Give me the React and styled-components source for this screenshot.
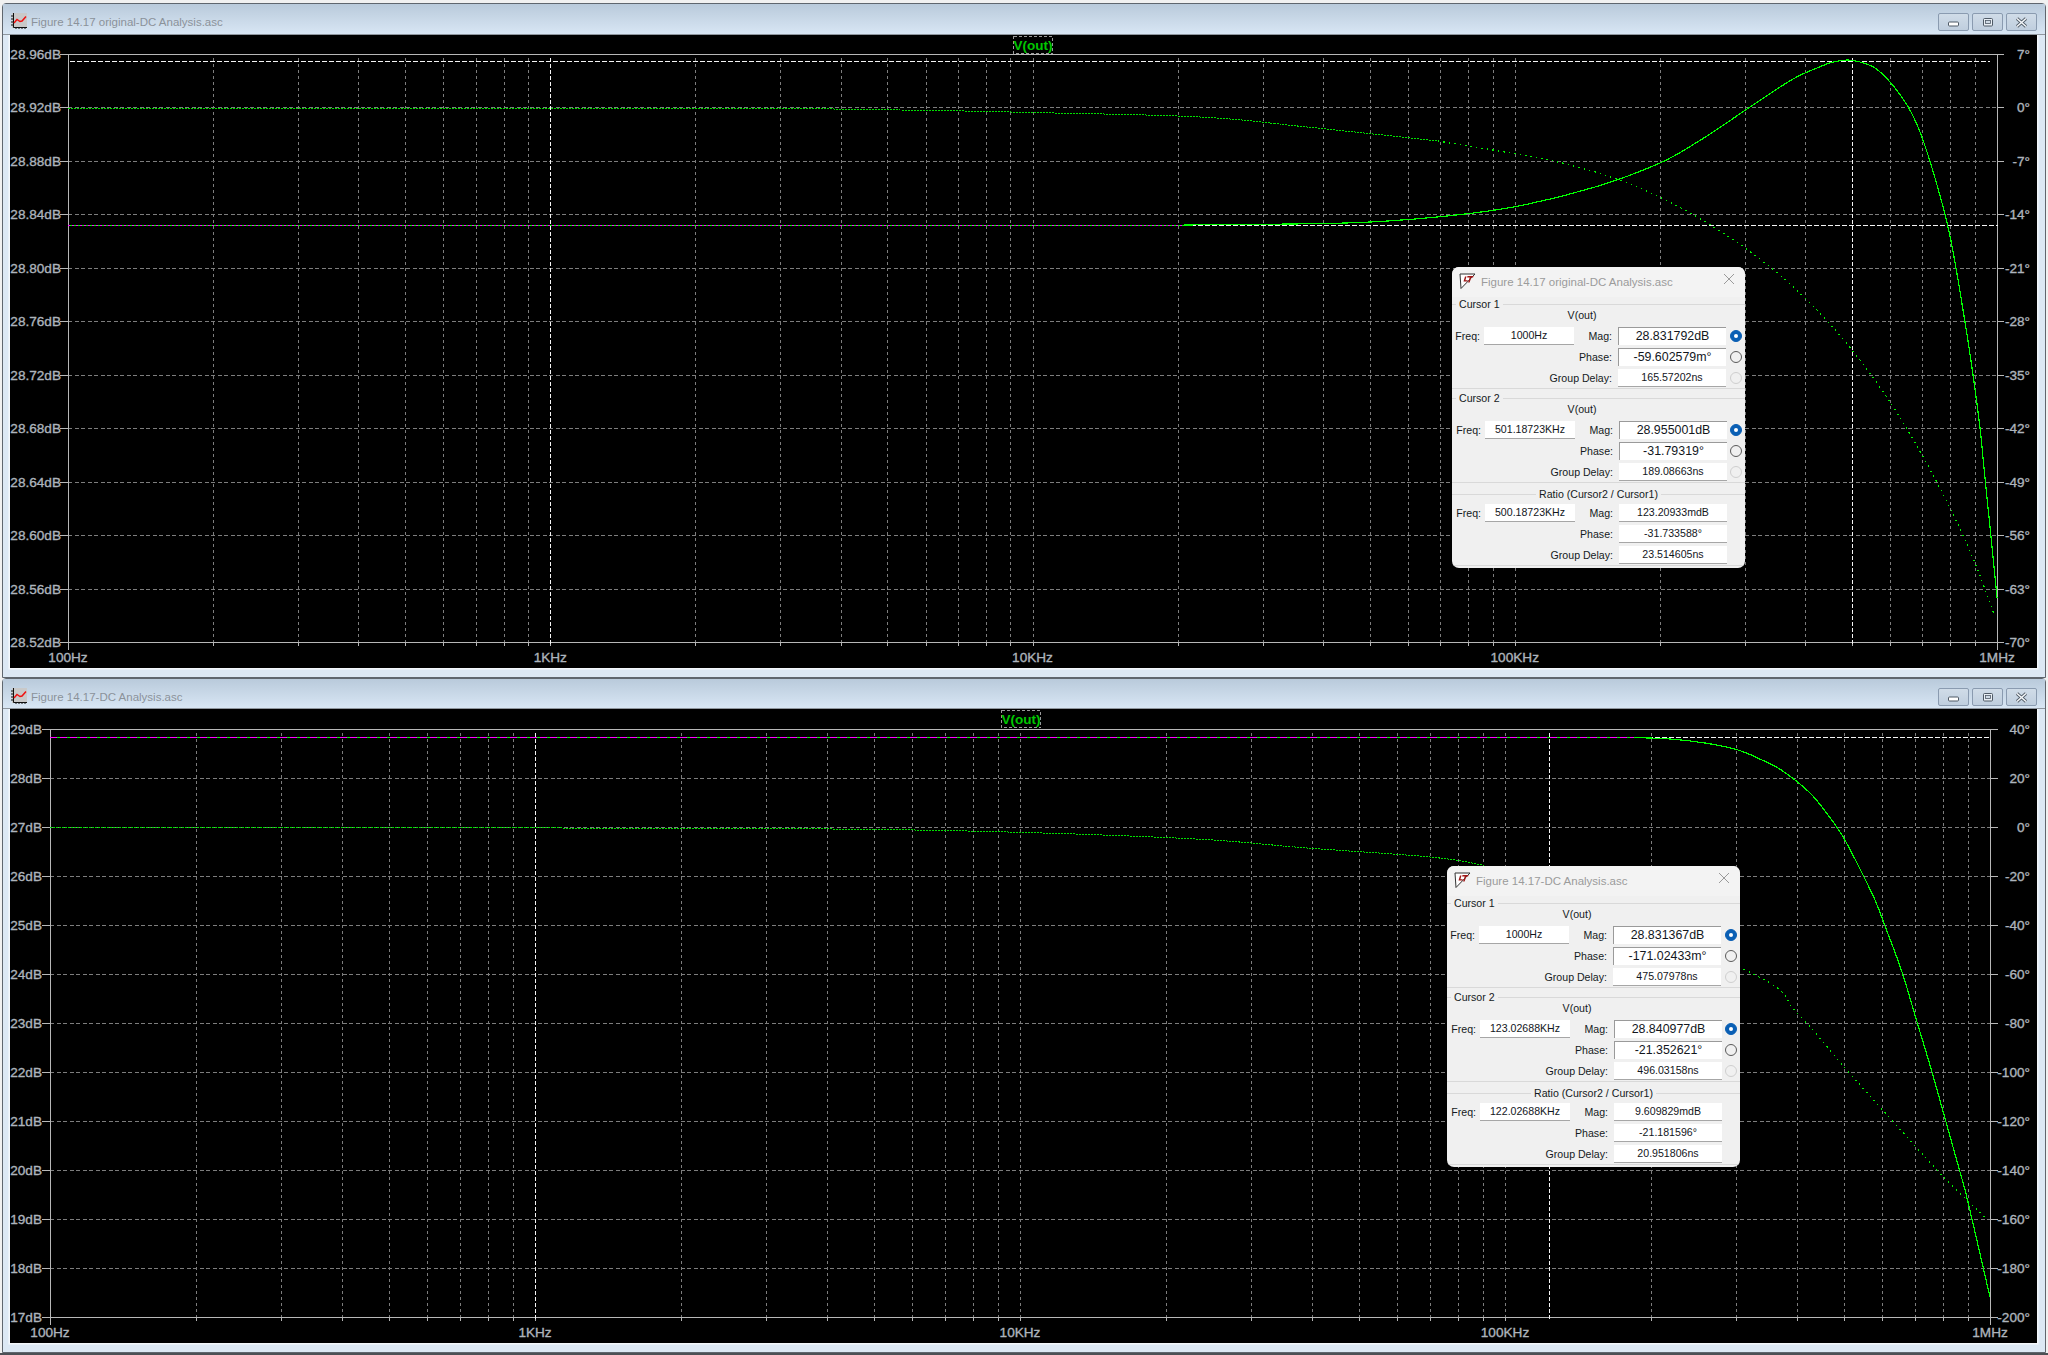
import React from 'react';
import styled, { createGlobalStyle } from 'styled-components';

const GlobalStyle = createGlobalStyle`
  html, body {
    margin: 0;
    padding: 0;
    background: #f1f1f1;
    font-family: "Liberation Sans", Arial, sans-serif;
  }
`;

// Catmull-Rom through the points read off the traces
const smooth = (pts) => {
  let d = `M${pts[0][0]} ${pts[0][1]}`;
  for (let i = 0; i < pts.length - 1; i++) {
    const p0 = pts[i - 1] || pts[i];
    const p1 = pts[i];
    const p2 = pts[i + 1];
    const p3 = pts[i + 2] || p2;
    const c1x = p1[0] + (p2[0] - p0[0]) / 6;
    const c1y = p1[1] + (p2[1] - p0[1]) / 6;
    const c2x = p2[0] - (p3[0] - p1[0]) / 6;
    const c2y = p2[1] - (p3[1] - p1[1]) / 6;
    d += ` C${c1x.toFixed(1)} ${c1y.toFixed(1)} ${c2x.toFixed(1)} ${c2y.toFixed(1)} ${p2[0]} ${p2[1]}`;
  }
  return d;
};

const topPlot = {
  box: { x: 10, y: 35, w: 2027, h: 633 },
  left: 68,
  right: 1997,
  top: 54,
  bottom: 642,
  tick: 7,
  labelLeft: 61,
  leftLabels: ['28.96dB', '28.92dB', '28.88dB', '28.84dB', '28.80dB', '28.76dB', '28.72dB', '28.68dB', '28.64dB', '28.60dB', '28.56dB', '28.52dB'],
  rightLabels: ['7°', '0°', '-7°', '-14°', '-21°', '-28°', '-35°', '-42°', '-49°', '-56°', '-63°', '-70°'],
  cursorX: [550.5, 1852.5],
  cursorY: [
    { y: 61.5, from: 70, to: 1990, mixedTo: 70, dash: '2 2' },
    { y: 225.5, from: 68, to: 1998, mixedTo: 1184, dash: '2 2' },
  ],
  magnitude: [
    [1184, 225], [1346, 223], [1437, 217], [1516, 206.5], [1595, 187], [1660, 163], [1699, 141], [1725, 124],
    [1750, 107], [1793, 79], [1817, 68], [1833, 62], [1848, 60], [1860, 62], [1875, 68], [1890, 82],
    [1907, 105], [1920, 132], [1935, 178], [1950, 236], [1965, 322], [1973, 375],
    [1980, 428], [1985, 478], [1990, 527], [1995, 577], [1997, 598],
  ],
  phaseFlat: [[68, 108], [720, 108.5], [900, 110], [1032, 112.5], [1200, 117], [1307, 127], [1438, 141]],
  phaseDots: [[1438, 141], [1516, 154], [1570, 165], [1630, 184], [1690, 213], [1752, 253], [1805, 298], [1852, 350], [1892, 405], [1922, 455], [1950, 508], [1975, 563], [1995, 617]],
  legendX: 1013,
  legendY: 36,
  xLabelY: 662,
};

const bottomPlot = {
  box: { x: 10, y: 709, w: 2027, h: 634 },
  left: 50,
  right: 1990,
  top: 729,
  bottom: 1317,
  tick: 8,
  labelLeft: 42,
  leftLabels: ['29dB', '28dB', '27dB', '26dB', '25dB', '24dB', '23dB', '22dB', '21dB', '20dB', '19dB', '18dB', '17dB'],
  rightLabels: ['40°', '20°', '0°', '-20°', '-40°', '-60°', '-80°', '-100°', '-120°', '-140°', '-160°', '-180°', '-200°'],
  cursorX: [535.5, 1549.5],
  cursorY: [{ y: 737.5, from: 50, to: 1990, mixedTo: 1634, dash: '7 3' }],
  magnitude: [
    [1634, 737.5], [1670, 739], [1705, 743], [1738, 750], [1762, 760], [1778, 768], [1795, 780], [1812, 795],
    [1828, 815], [1842, 835], [1858, 865], [1875, 900], [1885, 926], [1902, 972], [1917, 1022], [1932, 1072],
    [1946, 1122], [1960, 1172], [1967, 1198], [1990, 1297],
  ],
  phaseFlat: [[50, 827], [562, 828], [915, 830], [1176, 838], [1307, 848], [1430, 857], [1483, 865]],
  phaseDots: [[1483, 865], [1745, 970], [1797, 1013], [1845, 1068], [1888, 1116], [1937, 1170], [1967, 1200], [1987, 1219]],
  legendX: 1001,
  legendY: 710,
  xLabelY: 1337,
};

const dialogs = {
  top: {
    title: 'Figure 14.17 original-DC Analysis.asc',
    left: 1442,
    top: 232,
    cursor1: { freq: '1000Hz', mag: '28.831792dB', phase: '-59.602579m°', delay: '165.57202ns' },
    cursor2: { freq: '501.18723KHz', mag: '28.955001dB', phase: '-31.79319°', delay: '189.08663ns' },
    ratio: { freq: '500.18723KHz', mag: '123.20933mdB', phase: '-31.733588°', delay: '23.514605ns' },
  },
  bottom: {
    title: 'Figure 14.17-DC Analysis.asc',
    left: 1437,
    top: 157,
    cursor1: { freq: '1000Hz', mag: '28.831367dB', phase: '-171.02433m°', delay: '475.07978ns' },
    cursor2: { freq: '123.02688KHz', mag: '28.840977dB', phase: '-21.352621°', delay: '496.03158ns' },
    ratio: { freq: '122.02688KHz', mag: '9.609829mdB', phase: '-21.181596°', delay: '20.951806ns' },
  },
};

const Page = styled.div`
  width: 2048px;
  height: 1355px;
  padding: 3px 0 0 2px;
  box-sizing: border-box;
  overflow: hidden;
  display: flex;
  flex-direction: column;
`;

const Window = styled.section`
  width: 2044px;
  box-sizing: border-box;
  background: #dce8f4;
  border: 1px solid #5f666e;
  border-radius: 4px 4px 0 0;
  padding: 0 0 9px 7px;
  display: flex;
  flex-direction: column;
  align-items: flex-start;
`;

const TitleBar = styled.header`
  align-self: stretch;
  margin-left: -7px;
  height: ${(p) => p.$height}px;
  box-sizing: border-box;
  padding: 9px 8px 0;
  display: flex;
  align-items: flex-start;
  background: linear-gradient(to bottom, #b9cadb, #d8e6f4);
  border-bottom: 1px solid #8f969e;
`;

const WindowTitle = styled.span`
  margin-left: 4px;
  flex: 1;
  font-size: 11.5px;
  line-height: 19px;
  color: #8b929a;
`;

const CaptionButtons = styled.div`
  display: flex;
  gap: 3px;
`;

const CaptionButton = styled.div`
  width: 31px;
  height: 18px;
  box-sizing: border-box;
  border: 1px solid #8a9bb0;
  border-radius: 2px;
  background: linear-gradient(to bottom, #d0dce8, #bfcede);
  display: flex;
  align-items: center;
  justify-content: center;
`;

const PlotArea = styled.div`
  position: relative;
  width: 2027px;
  height: ${(p) => p.$height}px;
  background: #000;
  box-shadow: 0 0 0 1.5px #f3f7fb;
  clip-path: inset(0 -2px -2px -2px);
`;

const PlotSvg = styled.svg`
  display: block;
`;

const AxisText = styled.text`
  font-family: "Liberation Sans", Arial, sans-serif;
  font-size: 13.6px;
  fill: #adb4bc;
  stroke: #adb4bc;
  stroke-width: 0.35px;
`;

const LegendText = styled.text`
  font-family: "Liberation Sans", Arial, sans-serif;
  font-size: 13.5px;
  font-weight: bold;
  fill: #00c800;
`;

const Dialog = styled.aside`
  position: absolute;
  left: ${(p) => p.$left}px;
  top: ${(p) => p.$top}px;
  width: 293px;
  height: 301px;
  box-sizing: border-box;
  background: #f0f0f0;
  border-radius: 7px;
  overflow: hidden;
  font-size: 10.6px;
  color: #141a22;
`;

const DialogTitleBar = styled.div`
  height: 30px;
  box-sizing: border-box;
  padding: 6px 10px 0 7px;
  display: flex;
  align-items: flex-start;
  background: #f3f3f3;
`;

const DialogTitle = styled.span`
  flex: 1;
  margin-left: 5px;
  font-size: 11.5px;
  line-height: 18px;
  color: #9b9b9b;
`;

const Section = styled.div`
  padding: ${(p) => p.$pad}px 0 1px;
  border-bottom: 1px solid #d9d9d9;
`;

const GroupHeader = styled.div`
  height: 14px;
  line-height: 14px;
  display: flex;
  align-items: center;
  gap: 3px;
  white-space: nowrap;

  &::before {
    content: '';
    width: ${(p) => (p.$center ? 'auto' : '4px')};
    flex: ${(p) => (p.$center ? 1 : 'none')};
    height: 1px;
    background: #d9d9d9;
  }

  &::after {
    content: '';
    flex: 1;
    height: 1px;
    background: #d9d9d9;
  }
`;

const TraceName = styled.div`
  width: 260px;
  height: 12px;
  line-height: 12px;
  margin-top: -2px;
  margin-bottom: 6px;
  text-align: center;
`;

const ReadoutGrid = styled.div`
  display: grid;
  grid-template-columns: 32px 90px 44px 108px ${(p) => 16 - (p.$shift || 0)}px;
  grid-auto-rows: 18px;
  row-gap: 3px;
  padding-left: ${(p) => p.$shift || 0}px;
  margin-top: ${(p) => p.$top || 0}px;
  align-items: center;
`;

const RowLabel = styled.span`
  text-align: right;
  white-space: nowrap;
  padding-right: ${(p) => p.$gap}px;
  grid-column: ${(p) => (p.$wide ? '1 / span 3' : 'auto')};
`;

const Readout = styled.div`
  height: 18px;
  box-sizing: border-box;
  background: #fff;
  text-align: center;
  white-space: nowrap;
  line-height: 17px;
  font-size: ${(p) => (p.$sunken ? '12.4px' : '10.6px')};
  border-top: ${(p) => (p.$sunken ? '1px solid #9a9a9a' : 'none')};
  border-left: ${(p) => (p.$sunken ? '1px solid #9a9a9a' : 'none')};
  border-bottom: ${(p) => (p.$sunken ? 'none' : '1px solid #a6a6a6')};
  color: #12161c;
`;

const radioColors = {
  on: { border: '#0a5fb4', fill: '#0a5fb4', dot: '#fff' },
  off: { border: '#5a5a5a', fill: '#f0f0f0', dot: 'transparent' },
  disabled: { border: '#cfcfcf', fill: '#f0f0f0', dot: 'transparent' },
};

const Radio = styled.span`
  justify-self: end;
  width: 12px;
  height: 12px;
  box-sizing: border-box;
  border-radius: 50%;
  border: 1px solid ${(p) => radioColors[p.$state].border};
  background: ${(p) => radioColors[p.$state].fill};
  display: flex;
  align-items: center;
  justify-content: center;

  &::after {
    content: '';
    width: 4px;
    height: 4px;
    border-radius: 50%;
    background: ${(p) => radioColors[p.$state].dot};
  }
`;

const BottomEdge = styled.div`
  height: 3px;
  background: #4c5055;
  margin-left: -2px;
`;

const PlotIcon = () => (
  <svg width="16" height="16" viewBox="0 0 16 16">
    <rect x="1" y="0" width="15" height="15" fill="#c9c9c9" />
    <path d="M2.5 0V14.5H16" stroke="#111" fill="none" />
    <path d="M0 3h2M0 6h2M0 9h2M0 12h2M5 15v1M8 15v1M11 15v1M14 15v1" stroke="#111" fill="none" />
    <path d="M3 10L6 6.5L9 8.5L11 8L15 3.5" stroke="#f01010" strokeWidth="1.5" fill="none" />
  </svg>
);

const LtIcon = () => (
  <svg width="17" height="17" viewBox="0 0 17 17">
    <path d="M1 1H16L2 15.5Z" fill="#fff" stroke="#333" strokeWidth="1" />
    <path d="M6 3.5L4.5 8.5H8.5L8.8 7.2H6.4L7.5 3.5Z" fill="#a01818" />
    <path d="M8.5 3H14.5L14.1 4.4H12.3L10.6 9.5H9.1L10.7 4.4H8.1Z" fill="#a01818" />
  </svg>
);

const MinGlyph = () => (
  <svg width="13" height="9" viewBox="0 0 13 9">
    <rect x="1.5" y="4" width="10" height="4" rx="1" fill="#fff" stroke="#4f5a66" />
  </svg>
);

const MaxGlyph = () => (
  <svg width="12" height="11" viewBox="0 0 12 11">
    <rect x="1.5" y="1.5" width="9" height="7.5" rx="1" fill="#e8eef4" stroke="#4f5a66" />
    <rect x="3.5" y="3.5" width="5" height="3" fill="#d0dbe6" stroke="#4f5a66" strokeWidth="0.8" />
  </svg>
);

const CloseGlyph = () => (
  <svg width="13" height="11" viewBox="0 0 13 11">
    <path d="M2 1.5L11 9.5M11 1.5L2 9.5" stroke="#4f5a66" strokeWidth="3.2" />
    <path d="M2 1.5L11 9.5M11 1.5L2 9.5" stroke="#f4f7fa" strokeWidth="1.6" />
  </svg>
);

const DialogClose = () => (
  <svg width="12" height="12" viewBox="0 0 12 12">
    <path d="M1 1L11 11M11 1L1 11" stroke="#9a9a9a" strokeWidth="1" />
  </svg>
);

const Plot = ({ cfg }) => {
  const { box, left, right, top, bottom, tick } = cfg;
  const decade = (right - left) / 4;
  const rowCount = cfg.leftLabels.length;
  const rowH = (bottom - top) / (rowCount - 1);
  const verticals = [];
  for (let d = 0; d < 4; d++) {
    for (let m = 1; m < 10; m++) {
      if (d === 0 && m === 1) continue;
      verticals.push(Math.round(left + (d + Math.log10(m)) * decade) + 0.5);
    }
  }
  const rows = cfg.leftLabels.map((_, i) => Math.round(top + i * rowH) + 0.5);
  const xLabels = ['100Hz', '1KHz', '10KHz', '100KHz', '1MHz'];

  return (
    <PlotSvg width={box.w} height={box.h} viewBox={`${box.x} ${box.y} ${box.w} ${box.h}`}>
      <g shapeRendering="crispEdges" fill="none">
        {verticals.map((x) => (
          <g key={x}>
            <line x1={x} x2={x} y1={top + 4} y2={bottom} stroke="#7d7d7d" strokeDasharray="3 3" />
            <line x1={x} x2={x} y1={bottom} y2={bottom + 4} stroke="#b4b4b4" />
          </g>
        ))}
        {rows.map((y, i) => (
          <g key={y}>
            {i > 0 && i < rowCount - 1 && (
              <line x1={left} x2={right} y1={y} y2={y} stroke="#7d7d7d" strokeDasharray="4 2.5" />
            )}
            <line x1={left - 8} x2={left} y1={y} y2={y} stroke="#b8b8b8" />
            <line x1={right} x2={right + tick} y1={y} y2={y} stroke="#b8b8b8" />
          </g>
        ))}
        <line x1={left - 8} x2={right + tick} y1={rows[0]} y2={rows[0]} stroke="#b8b8b8" />
        <line x1={left - 8} x2={right + tick} y1={rows[rowCount - 1]} y2={rows[rowCount - 1]} stroke="#b8b8b8" />
        <line x1={left + 0.5} x2={left + 0.5} y1={top} y2={bottom + 8} stroke="#b8b8b8" />
        <line x1={right + 0.5} x2={right + 0.5} y1={top} y2={bottom + 8} stroke="#b8b8b8" />

        {cfg.cursorX.map((x) => (
          <line key={x} x1={x} x2={x} y1={top + 4} y2={bottom + 4} stroke="#f4f4f4" strokeDasharray="4 2" />
        ))}
        {cfg.cursorY.map(({ y, from, to, mixedTo, dash }) => (
          <g key={y}>
            {mixedTo > from && (
              <>
                <line x1={from} x2={mixedTo} y1={y} y2={y} stroke="#00ff00" />
                <line x1={from} x2={mixedTo} y1={y} y2={y} stroke="#ff00ff" strokeDasharray={dash} />
              </>
            )}
            <line x1={mixedTo} x2={to} y1={y} y2={y} stroke="#f4f4f4" strokeDasharray="5 2" />
          </g>
        ))}
      </g>

      <g fill="none" shapeRendering="crispEdges">
        <path d={smooth(cfg.phaseFlat)} stroke="#00e000" strokeWidth="1" strokeDasharray="2 1" />
        <path d={smooth(cfg.phaseDots)} stroke="#00f000" strokeWidth="1.2" strokeDasharray="1.5 4" />
        <path d={smooth(cfg.magnitude)} stroke="#00ff00" strokeWidth="1.2" />
      </g>

      {cfg.leftLabels.map((label, i) => (
        <AxisText key={label} x={cfg.labelLeft} y={rows[i] + 4} textAnchor="end">{label}</AxisText>
      ))}
      {cfg.rightLabels.map((label, i) => (
        <AxisText key={label} x={2030} y={rows[i] + 4} textAnchor="end">{label}</AxisText>
      ))}
      {xLabels.map((label, i) => (
        <AxisText key={label} x={left + i * decade} y={cfg.xLabelY} textAnchor="middle">{label}</AxisText>
      ))}

      <rect x={cfg.legendX + 0.5} y={cfg.legendY + 0.5} width="39" height="17" fill="#000" stroke="#9a9a9a" strokeDasharray="3 2" shapeRendering="crispEdges" />
      <LegendText x={cfg.legendX + 20} y={cfg.legendY + 13.5} textAnchor="middle">V(out)</LegendText>
    </PlotSvg>
  );
};

const CursorReadout = ({ name, values, shift }) => (
  <>
    <GroupHeader>{name}</GroupHeader>
    <TraceName>V(out)</TraceName>
    <ReadoutGrid $shift={shift}>
      <RowLabel $gap={4}>Freq:</RowLabel>
      <Readout>{values.freq}</Readout>
      <RowLabel $gap={6}>Mag:</RowLabel>
      <Readout $sunken>{values.mag}</Readout>
      <Radio $state="on" />
      <RowLabel $wide $gap={6}>Phase:</RowLabel>
      <Readout $sunken>{values.phase}</Readout>
      <Radio $state="off" />
      <RowLabel $wide $gap={6}>Group Delay:</RowLabel>
      <Readout>{values.delay}</Readout>
      <Radio $state="disabled" />
    </ReadoutGrid>
  </>
);

const CursorDialog = ({ data }) => (
  <Dialog $left={data.left} $top={data.top}>
    <DialogTitleBar>
      <LtIcon />
      <DialogTitle>{data.title}</DialogTitle>
      <DialogClose />
    </DialogTitleBar>
    <Section $pad={0}>
      <CursorReadout name="Cursor 1" values={data.cursor1} />
    </Section>
    <Section $pad={2}>
      <CursorReadout name="Cursor 2" values={data.cursor2} shift={1} />
    </Section>
    <Section $pad={4}>
      <GroupHeader $center>Ratio (Cursor2 / Cursor1)</GroupHeader>
      <ReadoutGrid $shift={1} $top={3}>
        <RowLabel $gap={4}>Freq:</RowLabel>
        <Readout>{data.ratio.freq}</Readout>
        <RowLabel $gap={6}>Mag:</RowLabel>
        <Readout>{data.ratio.mag}</Readout>
        <span />
        <RowLabel $wide $gap={6}>Phase:</RowLabel>
        <Readout>{data.ratio.phase}</Readout>
        <span />
        <RowLabel $wide $gap={6}>Group Delay:</RowLabel>
        <Readout>{data.ratio.delay}</Readout>
        <span />
      </ReadoutGrid>
    </Section>
  </Dialog>
);

const PlotWindow = ({ title, titleHeight, cfg, dialog }) => (
  <Window>
    <TitleBar $height={titleHeight}>
      <PlotIcon />
      <WindowTitle>{title}</WindowTitle>
      <CaptionButtons>
        <CaptionButton><MinGlyph /></CaptionButton>
        <CaptionButton><MaxGlyph /></CaptionButton>
        <CaptionButton><CloseGlyph /></CaptionButton>
      </CaptionButtons>
    </TitleBar>
    <PlotArea $height={cfg.box.h}>
      <Plot cfg={cfg} />
      <CursorDialog data={dialog} />
    </PlotArea>
  </Window>
);

const App = () => (
  <>
    <GlobalStyle />
    <Page>
      <PlotWindow title={dialogs.top.title} titleHeight={31} cfg={topPlot} dialog={dialogs.top} />
      <PlotWindow title={dialogs.bottom.title} titleHeight={30} cfg={bottomPlot} dialog={dialogs.bottom} />
      <BottomEdge />
    </Page>
  </>
);

export default App;
